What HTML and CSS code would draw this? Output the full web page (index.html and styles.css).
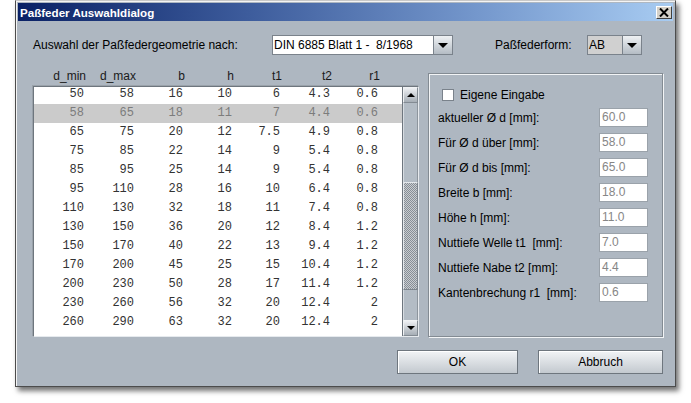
FILE: index.html
```html
<!DOCTYPE html>
<html lang="de">
<head>
<meta charset="utf-8">
<title>Paßfeder Auswahldialog</title>
<link rel="stylesheet" href="styles.css">
</head>
<body>
<div class="window">
  <div class="titlebar">
    <span class="title">Paßfeder Auswahldialog</span>
    <span class="close"><svg width="10" height="9" viewBox="0 0 10 9"><path d="M1 0.5 L9 8.5 M9 0.5 L1 8.5" stroke="#000" stroke-width="2"/></svg></span>
  </div>
  <div class="content">
    <div class="toprow">
      <span class="lbl-geo">Auswahl der Paßfedergeometrie nach:</span>
      <div class="combo combo-din"><span class="combo-text">DIN 6885 Blatt 1 -  8/1968</span><span class="combo-btn"><i class="tri"></i></span></div>
      <span class="lbl-form">Paßfederform:</span>
      <div class="combo combo-form"><span class="combo-text sel">AB</span><span class="combo-btn"><i class="tri"></i></span></div>
    </div>
    <div class="middle">
      <div class="left">
        <div class="grid thead">
          <span>d_min</span><span>d_max</span><span>b</span><span>h</span><span>t1</span><span>t2</span><span>r1</span>
        </div>
        <div class="scrollpane">
          <div class="viewport">
            <div class="rows">
              <div class="grid row"><span>50</span><span>58</span><span>16</span><span>10</span><span>6</span><span>4.3</span><span>0.6</span></div>
              <div class="grid row selected"><span>58</span><span>65</span><span>18</span><span>11</span><span>7</span><span>4.4</span><span>0.6</span></div>
              <div class="grid row"><span>65</span><span>75</span><span>20</span><span>12</span><span>7.5</span><span>4.9</span><span>0.8</span></div>
              <div class="grid row"><span>75</span><span>85</span><span>22</span><span>14</span><span>9</span><span>5.4</span><span>0.8</span></div>
              <div class="grid row"><span>85</span><span>95</span><span>25</span><span>14</span><span>9</span><span>5.4</span><span>0.8</span></div>
              <div class="grid row"><span>95</span><span>110</span><span>28</span><span>16</span><span>10</span><span>6.4</span><span>0.8</span></div>
              <div class="grid row"><span>110</span><span>130</span><span>32</span><span>18</span><span>11</span><span>7.4</span><span>0.8</span></div>
              <div class="grid row"><span>130</span><span>150</span><span>36</span><span>20</span><span>12</span><span>8.4</span><span>1.2</span></div>
              <div class="grid row"><span>150</span><span>170</span><span>40</span><span>22</span><span>13</span><span>9.4</span><span>1.2</span></div>
              <div class="grid row"><span>170</span><span>200</span><span>45</span><span>25</span><span>15</span><span>10.4</span><span>1.2</span></div>
              <div class="grid row"><span>200</span><span>230</span><span>50</span><span>28</span><span>17</span><span>11.4</span><span>1.2</span></div>
              <div class="grid row"><span>230</span><span>260</span><span>56</span><span>32</span><span>20</span><span>12.4</span><span>2</span></div>
              <div class="grid row"><span>260</span><span>290</span><span>63</span><span>32</span><span>20</span><span>12.4</span><span>2</span></div>
            </div>
          </div>
          <div class="scrollbar">
            <div class="sb-btn"><i class="tri-up"></i></div>
            <div class="sb-track sb-track-top"></div>
            <div class="sb-thumb"></div>
            <div class="sb-track sb-track-bottom"></div>
            <div class="sb-btn"><i class="tri-small"></i></div>
          </div>
        </div>
      </div>
      <div class="panel">
        <div class="check-row"><span class="checkbox"></span><span>Eigene Eingabe</span></div>
        <div class="field-row"><span class="flabel">aktueller Ø d [mm]:</span><span class="field">60.0</span></div>
        <div class="field-row"><span class="flabel">Für Ø d über [mm]:</span><span class="field">58.0</span></div>
        <div class="field-row"><span class="flabel">Für Ø d bis [mm]:</span><span class="field">65.0</span></div>
        <div class="field-row"><span class="flabel">Breite b [mm]:</span><span class="field">18.0</span></div>
        <div class="field-row"><span class="flabel">Höhe h [mm]:</span><span class="field">11.0</span></div>
        <div class="field-row"><span class="flabel">Nuttiefe Welle t1  [mm]:</span><span class="field">7.0</span></div>
        <div class="field-row"><span class="flabel">Nuttiefe Nabe t2 [mm]:</span><span class="field">4.4</span></div>
        <div class="field-row"><span class="flabel">Kantenbrechung r1  [mm]:</span><span class="field">0.6</span></div>
      </div>
    </div>
    <div class="buttons">
      <button class="btn btn-ok">OK</button>
      <button class="btn btn-cancel">Abbruch</button>
    </div>
  </div>
</div>
</body>
</html>
```

FILE: styles.css
```css
html, body {
  margin: 0;
  padding: 0;
  background: #ffffff;
}
body {
  width: 691px;
  height: 403px;
  overflow: hidden;
  font-family: "Liberation Sans", Arial, sans-serif;
  font-size: 12px;
  color: #000;
}
.window {
  margin-left: 15px;
  width: 661px;
  height: 387px;
  box-sizing: border-box;
  border: 1px solid #4c4c4c;
  border-top-color: #c8c8c8;
  background: #aeb7c1;
  padding: 2px;
  box-shadow: inset 1px 1px 0 #f4f4f4, 3px 4px 5px rgba(0,0,0,0.55);
  display: flex;
  flex-direction: column;
}
.titlebar {
  height: 18px;
  flex: none;
  display: flex;
  align-items: center;
  justify-content: space-between;
  background: linear-gradient(to right, #0a2165 0%, #3d5c9c 35%, #7497cc 70%, #a8ccf2 100%);
}
.title {
  color: #fff;
  font-weight: bold;
  font-size: 11.6px;
  padding-left: 2px;
  white-space: pre;
}
.close {
  width: 16px;
  height: 13px;
  box-sizing: border-box;
  margin-right: 1px;
  margin-top: 1px;
  background: #d4d0c8;
  border: 1px solid;
  border-color: #ffffff #404040 #404040 #ffffff;
  display: flex;
  align-items: center;
  justify-content: center;
}
.close svg { display: block; }
.content {
  flex: 1;
  padding: 0 9px 0 15px;
  display: flex;
  flex-direction: column;
}
.toprow {
  margin-top: 14px;
  height: 20px;
  display: flex;
  align-items: center;
}
.lbl-geo { width: 239px; white-space: pre; }
.lbl-form { margin-left: 42px; width: 92px; white-space: pre; }
.combo {
  height: 20px;
  box-sizing: border-box;
  border: 1px solid #7a828b;
  display: flex;
}
.combo-din { width: 181px; }
.combo-form { width: 55px; }
.combo-text {
  flex: 1;
  background: #fff;
  padding-left: 1px;
  line-height: 18px;
  white-space: pre;
}
.combo-text.sel { background: #d0d0d0; }
.combo-btn {
  width: 19px;
  flex: none;
  box-sizing: border-box;
  border-left: 1px solid #7a828b;
  background: linear-gradient(to bottom, #eef1f4, #b4bcc4);
  display: flex;
  align-items: center;
  justify-content: center;
}
.tri {
  width: 0; height: 0;
  border-left: 5px solid transparent;
  border-right: 5px solid transparent;
  border-top: 5px solid #000;
  margin-top: 1px;
}
.middle {
  margin-top: 11px;
  display: flex;
  gap: 9px;
  align-items: flex-start;
}
.left { width: 386px; }
.grid {
  display: grid;
  grid-template-columns: 50px 50px 49px 49px 48px 50px 48px;
}
.grid span { text-align: right; white-space: pre; }
.thead {
  height: 20px;
  line-height: 20px;
  padding-left: 3px;
  color: #1a1a1a;
}
.scrollpane {
  height: 251px;
  box-sizing: border-box;
  border: 1px solid #6e767e;
  border-right-color: #e6eaee;
  border-bottom-color: #e6eaee;
  box-shadow: -1px -1px 0 #9aa2aa;
  display: flex;
}
.viewport {
  width: 368px;
  background: #fff;
  overflow: hidden;
}
.rows { margin-top: -2px; }
.row {
  height: 19px;
  line-height: 19px;
  font-family: "Liberation Mono", "Courier New", monospace;
  font-size: 12px;
  color: #333;
}
.row.selected {
  background: #cbcbcb;
  color: #7c7c7c;
}
.scrollbar {
  width: 16px;
  box-sizing: border-box;
  border-left: 1px solid #6e767e;
  display: flex;
  flex-direction: column;
  background: #b3bcc5;
}
.sb-btn {
  height: 16px;
  flex: none;
  box-sizing: border-box;
  border: 1px solid #838b93;
  border-top-color: #f0f2f4;
  border-left-color: #f0f2f4;
  background: linear-gradient(to bottom, #eef0f3, #a6aeb6);
  display: flex;
  align-items: center;
  justify-content: center;
}
.tri-up {
  width: 0; height: 0;
  border-left: 4px solid transparent;
  border-right: 4px solid transparent;
  border-bottom: 4px solid #000;
}
.tri-small {
  width: 0; height: 0;
  border-left: 4px solid transparent;
  border-right: 4px solid transparent;
  border-top: 4px solid #000;
}
.sb-track {
  border-left: 1px solid #d8dde2;
  border-right: 1px solid #8d959d;
}
.sb-track-top { height: 79px; flex: none; }
.sb-track-bottom { flex: 1; }
.sb-thumb {
  height: 108px;
  flex: none;
  box-sizing: border-box;
  border: 1px solid #7d858d;
  border-top-color: #e4e8ec;
  border-left-color: #e4e8ec;
  background: repeating-conic-gradient(#878e96 0 25%, #c9cdd1 0 50%) 0 0 / 2px 2px;
}
.panel {
  width: 235px;
  height: 264px;
  margin-top: 7px;
  box-sizing: border-box;
  border: 1px solid #838b93;
  box-shadow: inset 1px 1px 0 #f2f4f6, 1px 1px 0 #f2f4f6;
  padding: 14px 14px 0 9px;
  display: flex;
  flex-direction: column;
  gap: 6px;
}
.check-row {
  height: 14px;
  display: flex;
  align-items: center;
  padding-left: 4px;
  gap: 6px;
}
.checkbox {
  width: 12px;
  height: 12px;
  box-sizing: border-box;
  background: #fff;
  border: 1px solid #7a828b;
}
.field-row {
  height: 19px;
  display: flex;
  align-items: center;
}
.flabel { flex: 1; white-space: pre; }
.field {
  width: 49px;
  height: 19px;
  box-sizing: border-box;
  background: #fff;
  border: 1px solid #9aa2aa;
  color: #868686;
  padding-left: 2px;
  line-height: 17px;
}
.buttons {
  margin-top: 13px;
  display: flex;
  justify-content: flex-end;
  gap: 20px;
  padding-right: 1px;
}
.btn {
  height: 24px;
  box-sizing: border-box;
  font-family: "Liberation Sans", Arial, sans-serif;
  font-size: 12px;
  color: #000;
  border: 1px solid #6e767e;
  background: linear-gradient(to bottom, #f2f4f6, #c3c9cf);
  box-shadow: inset 1px 1px 0 #ffffff;
  padding: 0;
}
.btn-ok { width: 121px; }
.btn-cancel { width: 125px; }
```
